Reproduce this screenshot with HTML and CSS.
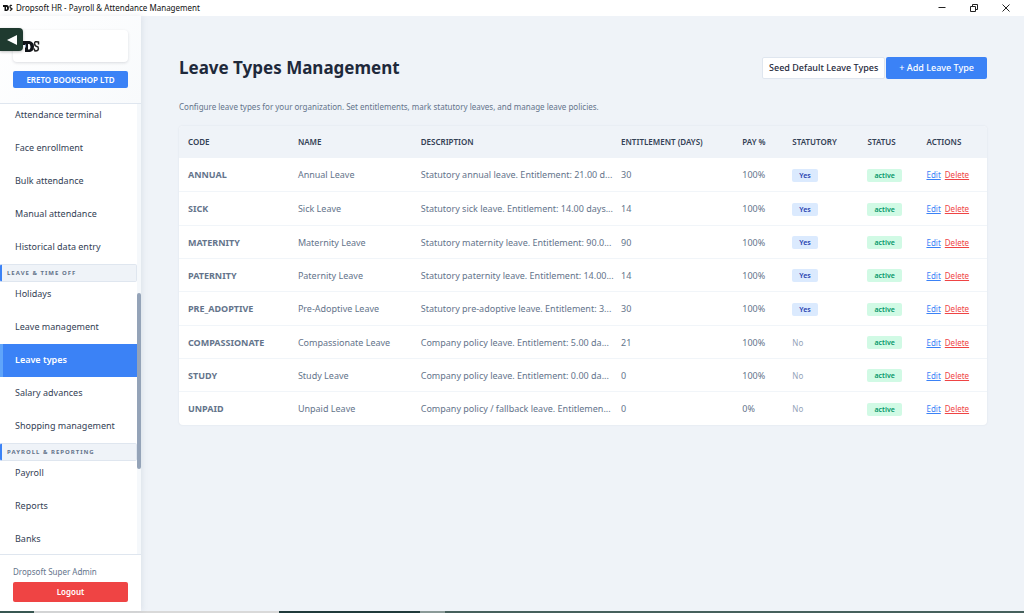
FILE: index.html
```
<!DOCTYPE html>
<html lang="en">
<head>
<meta charset="utf-8">
<title>Dropsoft HR - Payroll &amp; Attendance Management</title>
<link rel="stylesheet" href="styles.css">
</head>
<body>
<header class="titlebar">
  <svg class="app-icon" viewBox="0 0 10 8" aria-hidden="true"><path d="M1 1h3.2Q6 1.500 6 4T4 7H1.500V3H0V1zM3 3v2.500h.8Q4.500 4 3.800 3z" fill="#111" fill-rule="evenodd"/><path d="M9 1.500Q7 .8 7 2.500T8.500 4.500 7 6.800" fill="none" stroke="#222" stroke-width="1.300"/></svg>
  <span class="app-title">Dropsoft HR - Payroll &amp; Attendance Management</span>
  <div class="window-controls">
    <button type="button" aria-label="Minimize"><svg viewBox="0 0 8 8"><path d="M.5 3.500h7"/></svg></button>
    <button type="button" aria-label="Restore"><svg viewBox="0 0 8 8"><path d="M.5 2.500h5v5h-5zM2.500 2.500v-2h5v5h-2"/></svg></button>
    <button type="button" aria-label="Close"><svg viewBox="0 0 8 8"><path d="M.5.5l7 7M7.500.5l-7 7"/></svg></button>
  </div>
</header>
<div class="app">
  <aside class="sidebar">
    <button class="collapse" type="button" aria-label="Collapse sidebar"><svg viewBox="0 0 10 10"><path d="M10 0v10L0 5z" fill="#fff"/></svg></button>
    <div class="brand">
      <div class="logo-card">
        <svg class="logo" viewBox="0 0 17 13" role="img" aria-label="DS"><path d="M0 1h6.500Q11 2 11 6.500T7 12H2V5H0zM5 4v5.500h1.500Q8.500 7 6.500 4z" fill="#101318" fill-rule="evenodd"/><path d="M2.500 4.500v3" stroke="#8ba3c4"/><path d="M15.500 4.500V2Q11.500.8 11.500 3.500T15 7Q16.500 11 12 11L11 8.500" fill="none" stroke="#222" stroke-width="1.500"/></svg>
      </div>
      <div class="company">ERETO BOOKSHOP LTD</div>
    </div>
    <div class="nav-area">
      <nav class="nav">
        <a href="#" class="nav-item">Attendance terminal</a>
        <a href="#" class="nav-item">Face enrollment</a>
        <a href="#" class="nav-item">Bulk attendance</a>
        <a href="#" class="nav-item">Manual attendance</a>
        <a href="#" class="nav-item">Historical data entry</a>
        <h2 class="nav-section">LEAVE &amp; TIME OFF</h2>
        <a href="#" class="nav-item">Holidays</a>
        <a href="#" class="nav-item">Leave management</a>
        <a href="#" class="nav-item active" aria-current="page">Leave types</a>
        <a href="#" class="nav-item">Salary advances</a>
        <a href="#" class="nav-item">Shopping management</a>
        <h2 class="nav-section">PAYROLL &amp; REPORTING</h2>
        <a href="#" class="nav-item">Payroll</a>
        <a href="#" class="nav-item">Reports</a>
        <a href="#" class="nav-item">Banks</a>
      </nav>
      <div class="track"><div class="thumb"></div></div>
    </div>
    <div class="account">
      <div class="user">Dropsoft Super Admin</div>
      <button class="logout" type="button">Logout</button>
    </div>
  </aside>
  <main class="content">
    <div class="page-head">
      <h1>Leave Types Management</h1>
      <div class="actions">
        <button class="btn btn-plain" type="button">Seed Default Leave Types</button>
        <button class="btn btn-primary" type="button">+ Add Leave Type</button>
      </div>
    </div>
    <p class="intro">Configure leave types for your organization. Set entitlements, mark statutory leaves, and manage leave policies.</p>
    <div class="card">
      <table>
        <colgroup><col class="c-code"><col class="c-name"><col class="c-desc"><col class="c-days"><col class="c-pay"><col class="c-stat"><col class="c-status"><col class="c-act"></colgroup>
        <thead><tr><th>CODE</th><th>NAME</th><th>DESCRIPTION</th><th>ENTITLEMENT (DAYS)</th><th>PAY %</th><th>STATUTORY</th><th>STATUS</th><th>ACTIONS</th></tr></thead>
        <tbody>
          <tr><td class="code">ANNUAL</td><td>Annual Leave</td><td>Statutory annual leave. Entitlement: 21.00 d...</td><td>30</td><td>100%</td><td><span class="badge yes">Yes</span></td><td><span class="badge on">active</span></td><td class="links"><a href="#">Edit</a><a href="#" class="del">Delete</a></td></tr>
          <tr><td class="code">SICK</td><td>Sick Leave</td><td>Statutory sick leave. Entitlement: 14.00 days...</td><td>14</td><td>100%</td><td><span class="badge yes">Yes</span></td><td><span class="badge on">active</span></td><td class="links"><a href="#">Edit</a><a href="#" class="del">Delete</a></td></tr>
          <tr><td class="code">MATERNITY</td><td>Maternity Leave</td><td>Statutory maternity leave. Entitlement: 90.0...</td><td>90</td><td>100%</td><td><span class="badge yes">Yes</span></td><td><span class="badge on">active</span></td><td class="links"><a href="#">Edit</a><a href="#" class="del">Delete</a></td></tr>
          <tr><td class="code">PATERNITY</td><td>Paternity Leave</td><td>Statutory paternity leave. Entitlement: 14.00...</td><td>14</td><td>100%</td><td><span class="badge yes">Yes</span></td><td><span class="badge on">active</span></td><td class="links"><a href="#">Edit</a><a href="#" class="del">Delete</a></td></tr>
          <tr><td class="code">PRE_ADOPTIVE</td><td>Pre-Adoptive Leave</td><td>Statutory pre-adoptive leave. Entitlement: 3...</td><td>30</td><td>100%</td><td><span class="badge yes">Yes</span></td><td><span class="badge on">active</span></td><td class="links"><a href="#">Edit</a><a href="#" class="del">Delete</a></td></tr>
          <tr><td class="code">COMPASSIONATE</td><td>Compassionate Leave</td><td>Company policy leave. Entitlement: 5.00 da...</td><td>21</td><td>100%</td><td><span class="no">No</span></td><td><span class="badge on">active</span></td><td class="links"><a href="#">Edit</a><a href="#" class="del">Delete</a></td></tr>
          <tr><td class="code">STUDY</td><td>Study Leave</td><td>Company policy leave. Entitlement: 0.00 da...</td><td>0</td><td>100%</td><td><span class="no">No</span></td><td><span class="badge on">active</span></td><td class="links"><a href="#">Edit</a><a href="#" class="del">Delete</a></td></tr>
          <tr><td class="code">UNPAID</td><td>Unpaid Leave</td><td>Company policy / fallback leave. Entitlemen...</td><td>0</td><td>0%</td><td><span class="no">No</span></td><td><span class="badge on">active</span></td><td class="links"><a href="#">Edit</a><a href="#" class="del">Delete</a></td></tr>
        </tbody>
      </table>
    </div>
  </main>
</div>
<div class="taskbar-edge"></div>
</body>
</html>
```
FILE: styles.css
```
* { box-sizing: border-box; }
body {
  margin: 0;
  height: 100vh;
  display: flex;
  flex-direction: column;
  overflow: hidden;
  background: #eff3f8;
  color: #64748b;
  font: 9px/12px "Noto Sans", "Open Sans", sans-serif;
}
button { font: inherit; border: 0; padding: 0; cursor: pointer; }
a { color: inherit; }
h1, h2, p { margin: 0; }
svg { display: block; }

.titlebar { flex: none; display: flex; align-items: center; height: 16px; padding: 0 2px 0 3px; background: #fff; color: #111; }
.app-icon { width: 10px; height: 8px; margin-right: 3px; }
.app-title { font-size: 8px; }
.window-controls { display: flex; margin-left: auto; }
.window-controls button { display: grid; place-items: center; width: 32px; height: 14px; background: none; }
.window-controls svg { width: 8px; height: 8px; fill: none; stroke: #222; }

.app { flex: 1; min-height: 0; display: flex; }
.sidebar {
  position: relative;
  flex: none;
  width: 141px;
  display: flex;
  flex-direction: column;
  background: #fff;
  box-shadow: 1px 0 6px rgba(100, 116, 139, .14);
}
.collapse {
  position: absolute;
  top: 12px;
  left: 0;
  width: 23px;
  height: 23px;
  padding-left: 7px;
  border-radius: 0 4px 4px 0;
  background: #1f3a2f;
  box-shadow: 0 1px 3px rgba(0, 0, 0, .25);
}
.collapse svg { width: 10px; height: 10px; }
.brand { padding: 14px 13px; height: 87px; background: linear-gradient(135deg, #fff, #f8fafc); }
.logo-card { display: flex; align-items: center; height: 32px; padding-left: 10px; border-radius: 4px; background: #fff; box-shadow: 0 1px 3px rgba(15, 23, 42, .14); }
.logo { width: 17px; height: 13px; }
.company { margin-top: 9px; border-radius: 2px; background: #3b82f6; color: #fff; font-size: 8px; font-weight: 600; line-height: 17px; text-align: center; }

.nav-area { flex: 1; min-height: 0; display: flex; border-top: 1px solid #dfe6ef; border-bottom: 1px solid #dfe6ef; }
.nav { flex: 1; overflow: hidden; }
.nav-item { display: block; padding: 10px 12px 11px; border-left: 3px solid transparent; color: #334155; text-decoration: none; }
.nav-item:first-child { padding-top: 5px; }
.nav-section + .nav-item { padding-top: 6px; }
.nav-item.active { border-left-color: #60a5fa; background: #3b82f6; color: #fff; font-weight: 600; }
.nav-section { padding: 0 5px; border: 1px solid #dfe6ef; border-left: 2px solid #3b82f6; border-radius: 2px; background: #eff3f8; color: #64748b; font-size: 6px; font-weight: 700; line-height: 16px; letter-spacing: 1px; }
.track { position: relative; width: 4px; background: #f5f8fb; }
.thumb { position: absolute; top: 42%; left: 0; width: 100%; height: 39%; border-radius: 2px; background: #94a3b8; }

.account { padding: 11px 13px 9px; }
.user { font-size: 8px; }
.logout { display: block; width: 100%; height: 20px; margin-top: 4px; border-radius: 2px; background: #ef4444; color: #fff; font-size: 8px; font-weight: 600; }

.content { flex: 1; min-width: 0; padding: 40px 37px 0 38px; }
.page-head { display: flex; align-items: center; justify-content: space-between; }
h1 { color: #1e293b; font-size: 17px; font-weight: 700; line-height: 24px; }
.actions { display: flex; gap: 1px; }
.btn { height: 22px; border-radius: 2px; font-weight: 500; white-space: nowrap; }
.btn-plain { padding: 0 6px; border: 1px solid #dfe6ef; background: #fff; color: #1e293b; }
.btn-primary { padding: 0 13px; background: #3b82f6; color: #fff; }
.intro { margin-top: 21px; font-size: 8px; }

.card { margin-top: 13px; border-radius: 4px; background: #fff; box-shadow: 0 0 2px rgba(100, 116, 139, .14); overflow: hidden; }
table { width: 100%; table-layout: fixed; border-collapse: collapse; }
.c-code { width: 13.600%; }
.c-name { width: 15.200%; }
.c-desc { width: 24.800%; }
.c-days { width: 15%; }
.c-pay { width: 6.200%; }
.c-stat { width: 9.300%; }
.c-status { width: 7.300%; }
.c-act { width: 8.600%; }
th, td { padding: 0 0 0 9px; text-align: left; vertical-align: middle; white-space: nowrap; }
th { height: 32px; background: #eff3f8; color: #334155; font-size: 8px; font-weight: 600; }
td { height: 33px; padding-top: 2px; border-bottom: 1px solid #f1f5f9; }
tr:nth-child(3n + 2) td { height: 34px; }
tr:last-child td { border-bottom: 0; }
.code { font-weight: 700; }
.badge { display: inline-block; padding: 0 7px; border-radius: 2px; font-size: 7px; font-weight: 600; line-height: 13px; }
.yes { background: #dbeafe; color: #1e40af; }
.on { background: #d1fae5; color: #059669; }
.no { color: #94a3b8; font-size: 8px; }
.links { font-size: 8px; color: #3b82f6; }
.del { margin-left: 4px; color: #ef4444; }

.taskbar-edge { flex: none; height: 2px; background: linear-gradient(90deg, #37564f 0 34px, #d9d9d9 34px 279px, #1f3a3a 279px 420px, #8a9a97 420px 445px, #46605c 445px); }
```
